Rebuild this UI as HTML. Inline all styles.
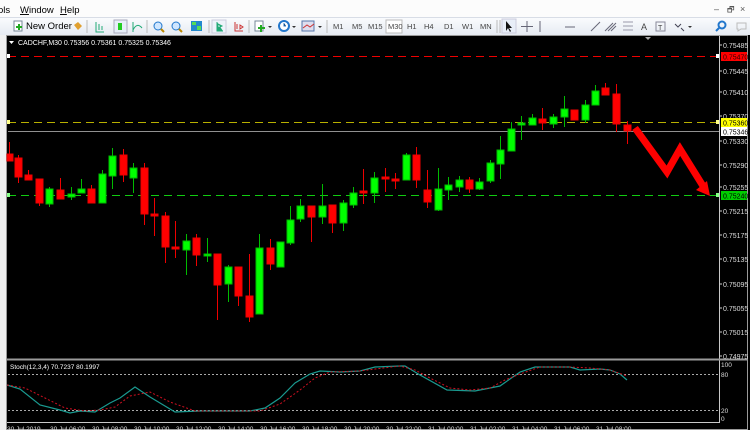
<!DOCTYPE html>
<html><head><meta charset="utf-8"><style>
html,body{margin:0;padding:0;width:750px;height:430px;overflow:hidden;background:#f0f0f0;font-family:"Liberation Sans",sans-serif}
svg{display:block}
</style></head><body>
<svg width="750" height="430" xmlns="http://www.w3.org/2000/svg" font-family="Liberation Sans, sans-serif">
<defs><linearGradient id="tb" x1="0" y1="0" x2="0" y2="1"><stop offset="0" stop-color="#fbfcfe"/><stop offset="1" stop-color="#e6ebf2"/></linearGradient></defs>
<rect x="0" y="0" width="750" height="17" fill="#fcfcfc"/>
<text x="-2" y="13" font-size="9.5" fill="#000">ols</text>
<text x="20" y="13" font-size="9.5" fill="#000"><tspan text-decoration="underline">W</tspan>indow</text>
<text x="60" y="13" font-size="9.5" fill="#000"><tspan text-decoration="underline">H</tspan>elp</text>
<text x="714" y="12" font-size="9" fill="#555">–</text><text x="727" y="12" font-size="8" fill="#555">🗗</text><text x="740" y="12" font-size="9" fill="#555">×</text>
<rect x="0" y="17" width="750" height="18" fill="url(#tb)"/>
<line x1="0" y1="17.5" x2="750" y2="17.5" stroke="#d8dde6"/>
<!-- toolbar icons -->
<rect x="14" y="21" width="8" height="10" fill="#fff" stroke="#789"/><rect x="16" y="26" width="6" height="2" fill="#2a2"/><rect x="18" y="24" width="2" height="6" fill="#2a2"/>
<text x="26" y="29" font-size="9.5" fill="#000">New Order</text>
<path d="M74 25l4-3 4 4-4 4z" fill="#e0a030"/>
<line x1="87" y1="20" x2="87" y2="33" stroke="#bbb"/>
<path d="M96 22v10h8M99 24v6M102 26v4" stroke="#2a7" fill="none"/>
<rect x="114" y="20" width="13" height="13" fill="#e6eef8" stroke="#aab"/><rect x="118" y="23" width="4" height="7" fill="#2c2"/>
<path d="M133 32v-10M133 30q4-8 9-2" stroke="#2a7" fill="none"/>
<line x1="147" y1="20" x2="147" y2="33" stroke="#bbb"/>
<circle cx="158" cy="26" r="4" fill="#cfe6ff" stroke="#27c"/><line x1="161" y1="29" x2="164" y2="32" stroke="#b80" stroke-width="2"/>
<circle cx="176" cy="26" r="4" fill="#cfe6ff" stroke="#27c"/><line x1="179" y1="29" x2="182" y2="32" stroke="#b80" stroke-width="2"/>
<rect x="191" y="21" width="11" height="10" fill="#28c"/><rect x="192" y="22" width="4" height="3" fill="#5d5"/><rect x="197" y="26" width="4" height="4" fill="#5d5"/>
<line x1="209" y1="20" x2="209" y2="33" stroke="#bbb"/>
<rect x="212" y="20" width="14" height="13" fill="#eef3fa" stroke="#ccd"/><path d="M217 22v9h6M218 24l4 2-4 2z" stroke="#2a7" fill="#2a7"/>
<path d="M235 22v9h8M237 24v5M240 25l3 2-3 2z" stroke="#c33" fill="none"/>
<line x1="249" y1="20" x2="249" y2="33" stroke="#bbb"/>
<rect x="255" y="21" width="8" height="10" fill="#fff" stroke="#789"/><rect x="258" y="27" width="7" height="2" fill="#2a2"/><rect x="260" y="25" width="2" height="7" fill="#2a2"/><path d="M268 26h4l-2 2z" fill="#333"/>
<circle cx="284" cy="26" r="5" fill="#fff" stroke="#27c" stroke-width="2"/><path d="M284 23v3h2" stroke="#27c"/><path d="M292 26h4l-2 2z" fill="#333"/>
<rect x="302" y="21" width="12" height="10" fill="#dde" stroke="#57a"/><path d="M303 28l4-3 3 2 4-3" stroke="#c33" fill="none"/><path d="M318 26h4l-2 2z" fill="#333"/>
<line x1="327" y1="20" x2="327" y2="33" stroke="#bbb"/>
<g font-size="7.5" fill="#444"><text x="333" y="29">M1</text><text x="352" y="29">M5</text><text x="368" y="29">M15</text></g>
<rect x="386" y="20" width="16" height="13" fill="#fff" stroke="#bbb"/>
<g font-size="7.5" fill="#444"><text x="388" y="29">M30</text><text x="407" y="29">H1</text><text x="424" y="29">H4</text><text x="444" y="29">D1</text><text x="462" y="29">W1</text><text x="480" y="29">MN</text></g>
<line x1="497" y1="20" x2="497" y2="33" stroke="#bbb"/><line x1="500" y1="20" x2="500" y2="33" stroke="#bbb"/>
<rect x="502" y="19" width="14" height="14" fill="#e8eef8" stroke="#ccd"/><path d="M506 21v10l2-3 2 4 1-1-2-3h3z" fill="#111"/>
<path d="M527 21v11M521 26.5h12" stroke="#667"/>
<line x1="540" y1="21" x2="540" y2="32" stroke="#667"/>
<line x1="565" y1="27" x2="575" y2="27" stroke="#667"/>
<line x1="591" y1="31" x2="600" y2="22" stroke="#667"/>
<path d="M605 31l8-8M608 31l8-8M611 31l5-5" stroke="#667"/>
<path d="M623 22h10M623 26h10M623 30h10" stroke="#99a"/>
<text x="641" y="30" font-size="9" fill="#444">A</text>
<rect x="656" y="22" width="9" height="9" fill="none" stroke="#889"/><text x="658" y="30" font-size="7" fill="#444">T</text>
<path d="M675 24l3 3 3-3M681 28l3 3" stroke="#445" fill="none"/><path d="M688 26h4l-2 2z" fill="#333"/>
<circle cx="722" cy="25" r="3.5" fill="none" stroke="#27c" stroke-width="2"/><line x1="719" y1="28" x2="716" y2="31" stroke="#27c" stroke-width="2"/>
<path d="M737 23h9v6h-5l-3 2v-2h-1z" fill="none" stroke="#bbb"/>
<!-- chart -->
<rect x="6" y="35" width="744" height="395" fill="#000"/>
<rect x="6.5" y="35.5" width="741" height="394" fill="none" stroke="#9a9a9a"/>
<line x1="719.5" y1="36" x2="719.5" y2="423" stroke="#c8c8c8"/>
<line x1="7" y1="359.5" x2="747" y2="359.5" stroke="#9a9a9a" stroke-width="2"/>
<line x1="7" y1="422.5" x2="719" y2="422.5" stroke="#c8c8c8"/>
<path d="M645 37l3 3 3-3z" fill="#aaa"/>
<text x="18" y="45" font-size="7" fill="#fff">CADCHF,M30  0.75356 0.75361 0.75325 0.75346</text>
<path d="M9 41h5l-2.5 3z" fill="#fff"/>
<!-- horizontal lines -->
<line x1="8" y1="56.5" x2="719" y2="56.5" stroke="#e00" stroke-dasharray="8,5"/>
<line x1="8" y1="122.5" x2="719" y2="122.5" stroke="#b8b000" stroke-dasharray="8,5"/>
<line x1="8" y1="131.5" x2="719" y2="131.5" stroke="#909090"/>
<line x1="8" y1="195.5" x2="719" y2="195.5" stroke="#1c1" stroke-dasharray="8,5"/>
<rect x="7" y="54" width="3" height="4" fill="#fff"/><rect x="7" y="120" width="3" height="4" fill="#ff8"/><rect x="7" y="193" width="3" height="4" fill="#8f8"/>
<rect x="716" y="54" width="3" height="4" fill="#fff"/><rect x="716" y="120" width="3" height="4" fill="#ff8"/><rect x="716" y="193" width="3" height="4" fill="#8f8"/>
<!-- candles -->
<g stroke-width="1">
<g stroke="#e00" fill="#f00">
<line x1="9.5" y1="142" x2="9.5" y2="161"/><rect x="7" y="154" width="6" height="7"/>
<line x1="18.5" y1="155" x2="18.5" y2="183"/><rect x="15" y="158" width="7" height="19"/>
<line x1="28.5" y1="170" x2="28.5" y2="180"/><rect x="25" y="175" width="7" height="5"/>
<line x1="39.5" y1="179" x2="39.5" y2="206"/><rect x="36" y="179" width="7" height="24"/>
<line x1="60.5" y1="178" x2="60.5" y2="199"/><rect x="57" y="190" width="7" height="9"/>
<line x1="91.5" y1="185" x2="91.5" y2="203"/><rect x="88" y="189" width="7" height="14"/>
<line x1="123.5" y1="149" x2="123.5" y2="182"/><rect x="120" y="155" width="7" height="20"/>
<line x1="144.5" y1="163" x2="144.5" y2="225"/><rect x="141" y="168" width="7" height="46"/>
<line x1="154.5" y1="198" x2="154.5" y2="236"/><rect x="151" y="214" width="7" height="2"/>
<line x1="165.5" y1="212" x2="165.5" y2="263"/><rect x="162" y="216" width="7" height="31"/>
<line x1="175.5" y1="221" x2="175.5" y2="258"/><rect x="172" y="247" width="7" height="2"/>
<line x1="196.5" y1="234" x2="196.5" y2="266"/><rect x="193" y="238" width="7" height="17"/>
<line x1="217.5" y1="254" x2="217.5" y2="320"/><rect x="214" y="254" width="7" height="31"/>
<line x1="238.5" y1="267" x2="238.5" y2="306"/><rect x="235" y="267" width="7" height="29"/>
<line x1="249.5" y1="254" x2="249.5" y2="322"/><rect x="246" y="296" width="7" height="21"/>
<line x1="270.5" y1="239" x2="270.5" y2="270"/><rect x="267" y="248" width="7" height="16"/>
<line x1="311.5" y1="206" x2="311.5" y2="242"/><rect x="308" y="206" width="7" height="11"/>
<line x1="332.5" y1="205" x2="332.5" y2="233"/><rect x="329" y="205" width="7" height="18"/>
<line x1="363.5" y1="169" x2="363.5" y2="204"/><rect x="360" y="191" width="7" height="2"/>
<line x1="385.5" y1="168" x2="385.5" y2="192"/><rect x="382" y="177" width="7" height="2"/>
<line x1="395.5" y1="173" x2="395.5" y2="189"/><rect x="392" y="179" width="7" height="2"/>
<line x1="416.5" y1="147" x2="416.5" y2="188"/><rect x="413" y="155" width="7" height="25"/>
<line x1="427.5" y1="170" x2="427.5" y2="208"/><rect x="424" y="190" width="7" height="12"/>
<line x1="469.5" y1="177" x2="469.5" y2="193"/><rect x="466" y="180" width="7" height="9"/>
<line x1="542.5" y1="108" x2="542.5" y2="130"/><rect x="539" y="119" width="7" height="4"/>
<line x1="574.5" y1="110" x2="574.5" y2="120"/><rect x="571" y="110" width="7" height="10"/>
<line x1="605.5" y1="83" x2="605.5" y2="95"/><rect x="602" y="88" width="7" height="7"/>
<line x1="616.5" y1="84" x2="616.5" y2="132"/><rect x="613" y="94" width="7" height="30"/>
<line x1="627.5" y1="121" x2="627.5" y2="144"/><rect x="624" y="125" width="7" height="6"/>
</g>
<g stroke="#0b0" fill="#0f0">
<line x1="49.5" y1="187" x2="49.5" y2="207"/><rect x="46" y="189" width="7" height="15"/>
<line x1="71.5" y1="187" x2="71.5" y2="200"/><rect x="68" y="194" width="7" height="3"/>
<line x1="81.5" y1="179" x2="81.5" y2="193"/><rect x="78" y="189" width="7" height="4"/>
<line x1="102.5" y1="170" x2="102.5" y2="203"/><rect x="99" y="174" width="7" height="29"/>
<line x1="112.5" y1="148" x2="112.5" y2="189"/><rect x="109" y="156" width="7" height="20"/>
<line x1="133.5" y1="163" x2="133.5" y2="193"/><rect x="130" y="168" width="7" height="10"/>
<line x1="186.5" y1="234" x2="186.5" y2="275"/><rect x="183" y="241" width="7" height="9"/>
<line x1="207.5" y1="238" x2="207.5" y2="262"/><rect x="204" y="254" width="7" height="2"/>
<line x1="228.5" y1="265" x2="228.5" y2="302"/><rect x="225" y="267" width="7" height="17"/>
<line x1="259.5" y1="234" x2="259.5" y2="314"/><rect x="256" y="248" width="7" height="66"/>
<line x1="280.5" y1="242" x2="280.5" y2="267"/><rect x="277" y="242" width="7" height="25"/>
<line x1="290.5" y1="206" x2="290.5" y2="245"/><rect x="287" y="220" width="7" height="23"/>
<line x1="300.5" y1="199" x2="300.5" y2="222"/><rect x="297" y="206" width="7" height="13"/>
<line x1="322.5" y1="184" x2="322.5" y2="224"/><rect x="319" y="206" width="7" height="11"/>
<line x1="343.5" y1="200" x2="343.5" y2="231"/><rect x="340" y="203" width="7" height="20"/>
<line x1="353.5" y1="187" x2="353.5" y2="208"/><rect x="350" y="193" width="7" height="12"/>
<line x1="374.5" y1="172" x2="374.5" y2="203"/><rect x="371" y="178" width="7" height="15"/>
<line x1="406.5" y1="153" x2="406.5" y2="180"/><rect x="403" y="155" width="7" height="25"/>
<line x1="438.5" y1="168" x2="438.5" y2="211"/><rect x="435" y="189" width="7" height="21"/>
<line x1="448.5" y1="177" x2="448.5" y2="200"/><rect x="445" y="185" width="7" height="5"/>
<line x1="459.5" y1="176" x2="459.5" y2="192"/><rect x="456" y="180" width="7" height="7"/>
<line x1="479.5" y1="178" x2="479.5" y2="190"/><rect x="476" y="182" width="7" height="7"/>
<line x1="490.5" y1="160" x2="490.5" y2="183"/><rect x="487" y="163" width="7" height="18"/>
<line x1="500.5" y1="136" x2="500.5" y2="179"/><rect x="497" y="150" width="7" height="14"/>
<line x1="511.5" y1="122" x2="511.5" y2="151"/><rect x="508" y="129" width="7" height="22"/>
<line x1="521.5" y1="116" x2="521.5" y2="140"/><rect x="518" y="123" width="7" height="2"/>
<line x1="532.5" y1="114" x2="532.5" y2="125"/><rect x="529" y="118" width="7" height="7"/>
<line x1="553.5" y1="114" x2="553.5" y2="128"/><rect x="550" y="117" width="7" height="7"/>
<line x1="564.5" y1="96" x2="564.5" y2="127"/><rect x="561" y="109" width="7" height="8"/>
<line x1="585.5" y1="100" x2="585.5" y2="123"/><rect x="582" y="105" width="7" height="15"/>
<line x1="595.5" y1="85" x2="595.5" y2="105"/><rect x="592" y="91" width="7" height="14"/>
</g></g>
<!-- arrow -->
<path d="M635 128L667 172L680 149L703 186" stroke="#f00" stroke-width="7" fill="none" stroke-linejoin="miter"/>
<path d="M696 190L710 196L707 181z" fill="#f00"/>
<!-- price axis -->
<g font-size="7" fill="#ddd">
<text x="723" y="48">0.75485</text><text x="723" y="74">0.75445</text><text x="723" y="95">0.75410</text><text x="723" y="119">0.75370</text><text x="723" y="144">0.75330</text><text x="723" y="168">0.75290</text><text x="723" y="190">0.75255</text><text x="723" y="214">0.75215</text><text x="723" y="238">0.75175</text><text x="723" y="262">0.75135</text><text x="723" y="287">0.75095</text><text x="723" y="311">0.75055</text><text x="723" y="335">0.75015</text><text x="723" y="359">0.74975</text>
</g>
<g stroke="#ccc"><path d="M719 45h3M719 71h3M719 92h3M719 116h3M719 141h3M719 165h3M719 187h3M719 211h3M719 235h3M719 259h3M719 284h3M719 308h3M719 332h3M719 356h3"/></g>
<rect x="721" y="52" width="26" height="9" fill="#f00"/><text x="723" y="59.5" font-size="7" fill="#300">0.75470</text>
<rect x="721" y="118" width="26" height="9" fill="#ff0"/><text x="723" y="125.5" font-size="7" fill="#000">0.75360</text>
<rect x="721" y="127" width="26" height="9" fill="#fff"/><text x="723" y="134.5" font-size="7" fill="#000">0.75346</text>
<rect x="721" y="191" width="26" height="9" fill="#0c0"/><text x="723" y="198.5" font-size="7" fill="#000">0.75240</text>
<!-- stoch -->
<text x="10" y="369" font-size="6.5" fill="#fff">Stoch(12,3,4) 70.7237 80.1997</text>
<line x1="8" y1="374.5" x2="719" y2="374.5" stroke="#aaa" stroke-dasharray="2,2"/>
<line x1="8" y1="410.5" x2="719" y2="410.5" stroke="#aaa" stroke-dasharray="2,2"/>
<g font-size="6.5" fill="#ddd"><text x="721" y="367">100</text><text x="721" y="377">80</text><text x="721" y="413">20</text><text x="721" y="421">0</text></g>
<polyline fill="none" stroke="#1a9a90" stroke-width="1.2" points="7,385 20,389 40,405 60,410 70,413 80,411 95,412 110,403 120,398 135,387 150,397 175,412 200,411 230,411 250,411 265,408 280,398 295,383 310,374 320,371 340,372 360,371 375,367 400,366 405,366 420,375 447,390 475,391 500,386 520,372 535,367 570,367 580,370 600,369 610,370 620,374 627,380"/>
<polyline fill="none" stroke="#d01020" stroke-width="1" stroke-dasharray="2,2" points="7,385 25,388 45,398 65,408 85,411 100,410 115,407 130,396 150,392 170,402 195,411 230,411 260,411 280,404 300,390 315,378 330,372 360,371 375,369 400,366 415,370 430,378 450,388 470,390 490,388 505,380 520,374 540,367 570,367 590,368 610,370 627,376"/>
<!-- time axis -->
<g font-size="6.5" fill="#ddd">
<text x="7" y="431">30 Jul 2019</text><text x="50" y="431">30 Jul 06:00</text><text x="92" y="431">30 Jul 08:00</text><text x="134" y="431">30 Jul 10:00</text><text x="176" y="431">30 Jul 12:00</text><text x="218" y="431">30 Jul 14:00</text><text x="260" y="431">30 Jul 16:00</text><text x="302" y="431">30 Jul 18:00</text><text x="344" y="431">30 Jul 20:00</text><text x="386" y="431">30 Jul 22:00</text><text x="428" y="431">31 Jul 00:00</text><text x="470" y="431">31 Jul 02:00</text><text x="512" y="431">31 Jul 04:00</text><text x="554" y="431">31 Jul 06:00</text><text x="596" y="431">31 Jul 08:00</text>
</g>
</svg>
</body></html>
